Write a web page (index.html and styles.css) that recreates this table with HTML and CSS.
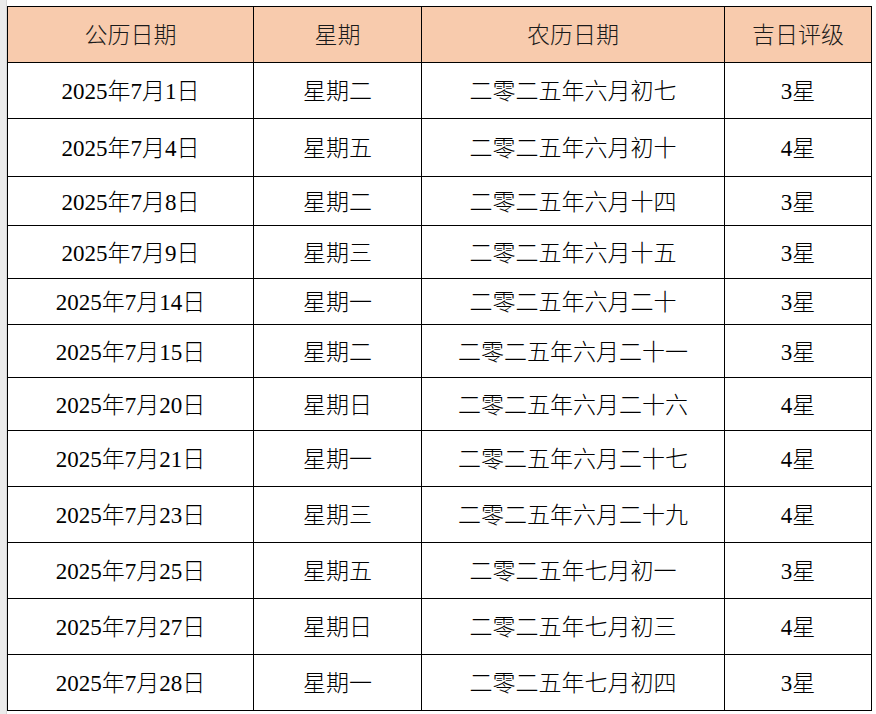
FILE: index.html
```html
<!DOCTYPE html>
<html lang="zh-CN">
<head>
<meta charset="utf-8">
<title>吉日表</title>
<link rel="stylesheet" href="styles.css">
</head>
<body>
<div class="sheet">
  <div class="gutter"></div>
  <div class="area">
    <table class="grid">
      <colgroup>
        <col class="c1"><col class="c2"><col class="c3"><col class="c4">
      </colgroup>
      <thead>
        <tr class="h56"><th>公历日期</th><th>星期</th><th>农历日期</th><th>吉日评级</th></tr>
      </thead>
      <tbody>
        <tr class="h56"><td>2025年7月1日</td><td>星期二</td><td>二零二五年六月初七</td><td>3星</td></tr>
        <tr class="h58"><td>2025年7月4日</td><td>星期五</td><td>二零二五年六月初十</td><td>4星</td></tr>
        <tr class="h49"><td>2025年7月8日</td><td>星期二</td><td>二零二五年六月十四</td><td>3星</td></tr>
        <tr class="h53"><td>2025年7月9日</td><td>星期三</td><td>二零二五年六月十五</td><td>3星</td></tr>
        <tr class="h46"><td>2025年7月14日</td><td>星期一</td><td>二零二五年六月二十</td><td>3星</td></tr>
        <tr class="h53"><td>2025年7月15日</td><td>星期二</td><td>二零二五年六月二十一</td><td>3星</td></tr>
        <tr class="h53"><td>2025年7月20日</td><td>星期日</td><td>二零二五年六月二十六</td><td>4星</td></tr>
        <tr class="h56"><td>2025年7月21日</td><td>星期一</td><td>二零二五年六月二十七</td><td>4星</td></tr>
        <tr class="h56"><td>2025年7月23日</td><td>星期三</td><td>二零二五年六月二十九</td><td>4星</td></tr>
        <tr class="h56"><td>2025年7月25日</td><td>星期五</td><td>二零二五年七月初一</td><td>3星</td></tr>
        <tr class="h56"><td>2025年7月27日</td><td>星期日</td><td>二零二五年七月初三</td><td>4星</td></tr>
        <tr class="h56"><td>2025年7月28日</td><td>星期一</td><td>二零二五年七月初四</td><td>3星</td></tr>
      </tbody>
    </table>
  </div>
</div>
</body>
</html>
```

FILE: styles.css
```css
html, body {
  margin: 0;
  padding: 0;
  background: #ffffff;
}
.sheet {
  display: flex;
  min-height: 714px;
  width: 876px;
  overflow: hidden;
}
.gutter {
  width: 6px;
  flex: none;
  background: #ebebeb;
  border-right: 1px solid #d6d6d6;
}
.area {
  padding-top: 6px;
}
.grid {
  border-collapse: collapse;
  table-layout: fixed;
  width: 865px;
  font-family: "Liberation Serif", "Noto Sans CJK SC", serif;
  font-size: 23px;
  font-weight: 300;
  color: #000;
}
.c1 { width: 246px; }
.c2 { width: 168px; }
.c3 { width: 303px; }
.c4 { width: 147px; }
.grid th, .grid td {
  border: 1px solid #000;
  padding: 2px 0 0 0;
  text-align: center;
  vertical-align: middle;
  font-weight: 300;
  line-height: 1;
  white-space: nowrap;
}
.grid th {
  background: #f8cbad;
  color: #1a1a1a;
}
.h46 { height: 46px; }
.h49 { height: 49px; }
.h53 { height: 53px; }
.h56 { height: 56px; }
.h58 { height: 58px; }
```
